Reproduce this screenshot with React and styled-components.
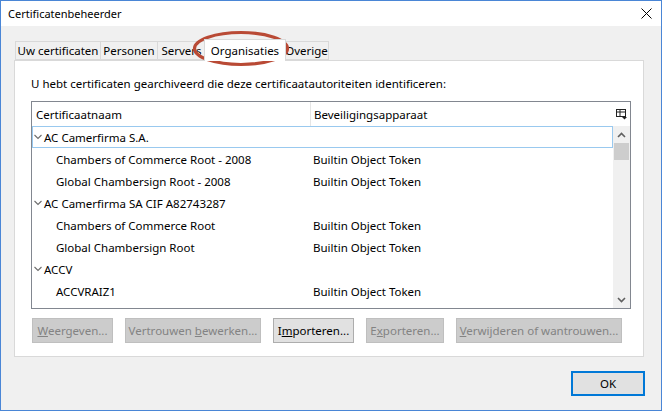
import React from "react";
import styled, { createGlobalStyle } from "styled-components";

const GlobalStyle = createGlobalStyle`
    * {
        margin: 0;
        padding: 0;
        box-sizing: border-box;
    }

    body {
        width: 662px;
        height: 411px;
        overflow: hidden;
        background: #ffffff;
        font-family: "Noto Sans", "Segoe UI", sans-serif;
        font-size: 11.5px;
        color: #000000;
    }
`

const Window = styled.div`
    position: relative;
    width: 662px;
    height: 411px;
    display: flex;
    flex-direction: column;
    border: 1px solid #4a86d6;
    background: #f0f0f0;
`

const TitleBar = styled.div`
    height: 25px;
    flex: none;
    display: flex;
    align-items: center;
    justify-content: space-between;
    padding: 0 9px 0 7px;
    background: #ffffff;
    font-size: 11px;
`

const Body = styled.div`
    flex: 1;
    display: flex;
    flex-direction: column;
    padding: 13px 17px 14px 13px;
`

const TabStrip = styled.div`
    height: 21px;
    display: flex;
    align-items: flex-end;
    padding-left: 1px;
`

const Tab = styled.div`
    position: relative;
    width: ${(p) => p.$w}px;
    height: ${(p) => (p.$active ? "22px" : "19px")};
    margin-bottom: ${(p) => (p.$active ? "-1px" : "0")};
    margin-left: ${(p) => (p.$active ? "-2px" : "0")};
    margin-right: ${(p) => (p.$active ? "-1px" : "0")};
    display: flex;
    align-items: center;
    justify-content: center;
    border: 1px solid #d9d9d9;
    border-bottom: ${(p) => (p.$active ? "none" : "1px solid #d9d9d9")};
    border-left: ${(p) => (p.$first || p.$active ? "1px solid #d9d9d9" : "none")};
    background: ${(p) => (p.$active ? "#ffffff" : "#f0f0f0")};
    z-index: ${(p) => (p.$active ? 1 : 0)};
    white-space: nowrap;
`

const Panel = styled.div`
    height: 297px;
    display: flex;
    flex-direction: column;
    border: 1px solid #d9d9d9;
    background: #ffffff;
    padding: 15px 12px 13px 16px;
`

const Intro = styled.div`
    height: 16px;
    line-height: 16px;
    white-space: nowrap;
`

const ListBox = styled.div`
    margin-top: 9px;
    height: 208px;
    border: 1px solid #828790;
    display: grid;
    grid-template-columns: 1fr 17px;
    grid-template-rows: 24px 1fr;
    overflow: hidden;
`

const Header = styled.div`
    display: grid;
    grid-template-columns: 279px 1fr;
`

const HeaderCell = styled.div`
    display: flex;
    align-items: center;
    padding-left: ${(p) => (p.$divider ? "4px" : "3px")};
    border-right: ${(p) => (p.$divider ? "1px solid #e5e5e5" : "none")};
`

const Picker = styled.div`
    display: flex;
    align-items: center;
    justify-content: center;
    background: #ffffff;
`

const Rows = styled.div`
    overflow: hidden;
`

const Row = styled.div`
    height: 22px;
    display: grid;
    grid-template-columns: 279px 1fr;
    align-items: center;
    border: 1px solid ${(p) => (p.$focus ? "#99c9ef" : "transparent")};
    white-space: nowrap;
`

const NameCell = styled.div`
    display: flex;
    align-items: center;
    padding-left: ${(p) => (p.$child ? "23px" : "0")};
`

const DeviceCell = styled.div`
    padding-left: 1px;
`

const Scrollbar = styled.div`
    display: flex;
    flex-direction: column;
    align-items: center;
    background: #f0f0f0;
`

const ScrollArrow = styled.div`
    height: 17px;
    width: 17px;
    flex: none;
    display: flex;
    align-items: center;
    justify-content: center;
`

const Thumb = styled.div`
    width: 15px;
    height: 17px;
    background: #cdcdcd;
`

const Track = styled.div`
    flex: 1;
`

const ButtonRow = styled.div`
    margin-top: 9px;
    display: flex;
    gap: 12px;
    padding-left: 1px;
`

const Button = styled.div`
    width: ${(p) => p.$w}px;
    height: 25px;
    display: flex;
    align-items: center;
    justify-content: center;
    white-space: nowrap;
    border: 1px solid ${(p) => (p.$disabled ? "#bfbfbf" : "#adadad")};
    background: ${(p) => (p.$disabled ? "#cccccc" : "#e1e1e1")};
    color: ${(p) => (p.$disabled ? "#838383" : "#000000")};
`

const Footer = styled.div`
    margin-top: 14px;
    display: flex;
    justify-content: flex-end;
    margin-right: -1px;
`

const OkButton = styled.div`
    width: 74px;
    height: 25px;
    display: flex;
    align-items: center;
    justify-content: center;
    border: 2px solid #0078d7;
    background: #e1e1e1;
`

const Annotation = styled.svg`
    position: absolute;
    left: 191px;
    top: 29px;
    pointer-events: none;
`

const Chevron = ({ up }) => (
    <svg width="9" height="6" viewBox="0 0 9 6">
        <path
            d={up ? "M1 5 L4.5 1.5 L8 5" : "M1 1 L4.5 4.5 L8 1"}
            fill="none"
            stroke="#606060"
            strokeWidth="1.6"
        />
    </svg>
)

const Expander = () => (
    <svg width="11" height="8" viewBox="0 0 11 8">
        <path d="M1.5 2 L5 5.5 L8.5 2" fill="none" stroke="#6d6d6d" strokeWidth="1.1" />
    </svg>
)

const groups = [
    {
        name: "AC Camerfirma S.A.",
        certs: ["Chambers of Commerce Root - 2008", "Global Chambersign Root - 2008"],
    },
    {
        name: "AC Camerfirma SA CIF A82743287",
        certs: ["Chambers of Commerce Root", "Global Chambersign Root"],
    },
    {
        name: "ACCV",
        certs: ["ACCVRAIZ1"],
    },
]

const tabs = [
    { label: "Uw certificaten", w: 86 },
    { label: "Personen", w: 57 },
    { label: "Servers", w: 48 },
    { label: "Organisaties", w: 82, active: true },
    { label: "Overige", w: 44 },
]

const App = () => {
    let first = true
    return (
        <React.Fragment>
            <GlobalStyle />
            <Window>
                <TitleBar>
                    <span>Certificatenbeheerder</span>
                    <svg width="11" height="11" viewBox="0 0 11 11">
                        <path d="M0.5 0.5 L10.5 10.5 M10.5 0.5 L0.5 10.5" stroke="#000" strokeWidth="1" />
                    </svg>
                </TitleBar>
                <Body>
                    <TabStrip>
                        {tabs.map((t, i) => (
                            <Tab key={t.label} $w={t.w} $first={i === 0} $active={t.active}>
                                {t.label}
                            </Tab>
                        ))}
                    </TabStrip>
                    <Panel>
                        <Intro>U hebt certificaten gearchiveerd die deze certificaatautoriteiten identificeren:</Intro>
                        <ListBox>
                            <Header>
                                <HeaderCell $divider>Certificaatnaam</HeaderCell>
                                <HeaderCell>Beveiligingsapparaat</HeaderCell>
                            </Header>
                            <Picker>
                                <svg width="11" height="11" viewBox="0 0 11 11">
                                    <rect x="0.5" y="0.5" width="9" height="7" fill="none" stroke="#222" />
                                    <path d="M0.5 3 H9.5 M4 0.5 V7.5" stroke="#222" />
                                    <path d="M6 8 H11 L8.5 10.5 Z" fill="#222" />
                                </svg>
                            </Picker>
                            <Rows>
                                {groups.map((g) => {
                                    const focus = first
                                    first = false
                                    return (
                                        <React.Fragment key={g.name}>
                                            <Row $focus={focus}>
                                                <NameCell>
                                                    <Expander />
                                                    <span>{g.name}</span>
                                                </NameCell>
                                                <DeviceCell />
                                            </Row>
                                            {g.certs.map((c) => (
                                                <Row key={c}>
                                                    <NameCell $child>{c}</NameCell>
                                                    <DeviceCell>Builtin Object Token</DeviceCell>
                                                </Row>
                                            ))}
                                        </React.Fragment>
                                    )
                                })}
                            </Rows>
                            <Scrollbar>
                                <ScrollArrow>
                                    <Chevron up />
                                </ScrollArrow>
                                <Thumb />
                                <Track />
                                <ScrollArrow>
                                    <Chevron />
                                </ScrollArrow>
                            </Scrollbar>
                        </ListBox>
                        <ButtonRow>
                            <Button $disabled $w={81}><span><u>W</u>eergeven...</span></Button>
                            <Button $disabled $w={136}><span>Vertrouwen <u>b</u>ewerken...</span></Button>
                            <Button $w={81}><span>I<u>m</u>porteren...</span></Button>
                            <Button $disabled $w={78}><span>E<u>x</u>porteren...</span></Button>
                            <Button $disabled $w={166}><span><u>V</u>erwijderen of wantrouwen...</span></Button>
                        </ButtonRow>
                    </Panel>
                    <Footer>
                        <OkButton>OK</OkButton>
                    </Footer>
                </Body>
                <Annotation width="100" height="37" viewBox="0 0 100 37">
                    <ellipse cx="49" cy="18.5" rx="46.5" ry="16" fill="none" stroke="#b94a35" strokeWidth="3.2" />
                </Annotation>
            </Window>
        </React.Fragment>
    )
}

export default App
